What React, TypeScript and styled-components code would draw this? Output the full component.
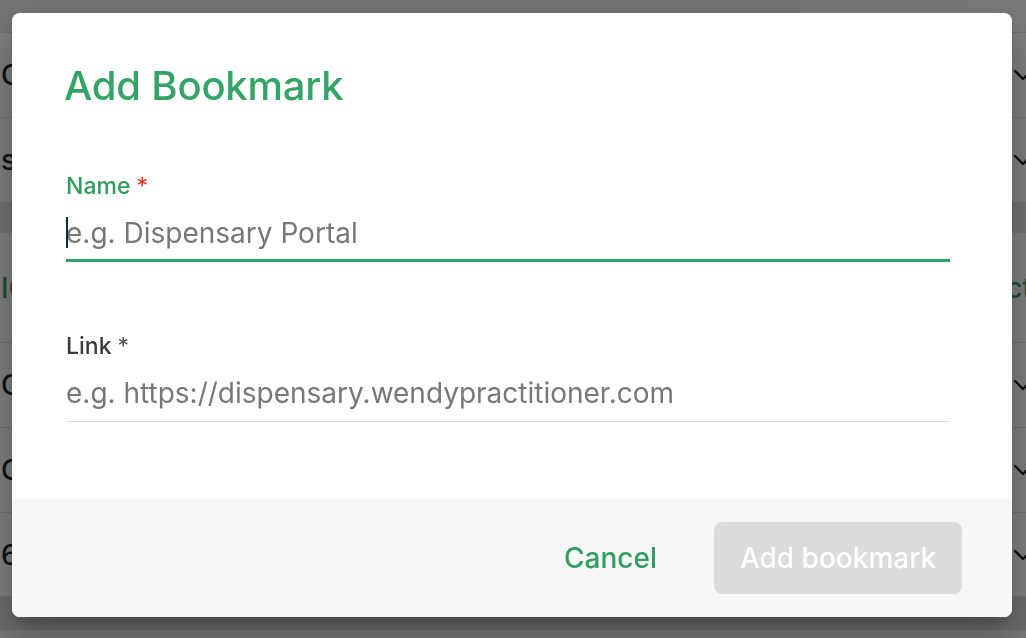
import React from "react";
import styled, { createGlobalStyle } from "styled-components";
import { ChevronDown } from "lucide-react";

const GlobalStyle = createGlobalStyle`
  html, body { margin: 0; padding: 0; overflow: hidden; }
  body { font-family: Inter, "Noto Sans", sans-serif; background: #fff; }
  * { box-sizing: border-box; }
`;

/* ---------- background page ---------- */
const Page = styled.div`
  width: 1026px;
  height: 638px;
  overflow: hidden;
  background: #f0f0f0;
  display: flex;
  flex-direction: column;
`;

const TopBar = styled.div`
  height: 33px;
  flex: none;
  display: flex;
  border-bottom: 1px solid #dcdcdc;
  background: #ececec;
`;

const TopBarRight = styled.div`
  margin-left: auto;
  width: 226px;
  background: #f6f6f6;
`;

const Row = styled.div<{ $h: number; $green?: boolean }>`
  height: ${(p) => p.$h}px;
  flex: none;
  display: flex;
  align-items: center;
  justify-content: space-between;
  background: #fff;
  border-bottom: 1px solid #e2e2e2;
  padding-left: 1px;
  font-size: 28px;
  font-weight: 500;
  color: ${(p) => (p.$green ? "#3a9c60" : "#1b2e2e")};
  white-space: nowrap;
`;

const Band = styled.div<{ $h: number; $bg: string }>`
  height: ${(p) => p.$h}px;
  flex: none;
  background: ${(p) => p.$bg};
`;

const RowChevron = styled(ChevronDown)`
  margin-right: -13px;
  color: #222;
  flex: none;
`;

const RowRightText = styled.span`
  margin-right: -6px;
`;

/* ---------- dialog ---------- */
const Overlay = styled.div`
  position: fixed;
  inset: 0;
  background: rgba(0, 0, 0, 0.5);
  display: flex;
  justify-content: flex-start;
  align-items: flex-start;
  padding: 13px 0 0 12px;
`;

const Dialog = styled.div`
  width: 1000px;
  height: 604px;
  background: #fff;
  border-radius: 8px;
  overflow: hidden;
  display: flex;
  flex-direction: column;
  box-shadow: 0 11px 15px -7px rgba(0, 0, 0, 0.2),
    0 24px 38px 3px rgba(0, 0, 0, 0.14), 0 9px 46px 8px rgba(0, 0, 0, 0.12);
`;

const Body = styled.div`
  flex: 1;
  padding: 49px 62px 0 52px;
  display: flex;
  flex-direction: column;
`;

const Title = styled.h2`
  margin: 0 0 62px;
  font-size: 40px;
  line-height: 48px;
  font-weight: 500;
  color: #34a466;
  letter-spacing: -0.2px;
`;

const Field = styled.div`
  display: flex;
  flex-direction: column;
  margin: 0 0 70px 2px;
`;

const Label = styled.label<{ $focused?: boolean }>`
  font-size: 23px;
  line-height: 28px;
  font-weight: 500;
  color: ${(p) => (p.$focused ? "#2f9e5e" : "#3a3a3a")};
  margin-bottom: 16px;
`;

const Star = styled.span<{ $focused?: boolean }>`
  color: ${(p) => (p.$focused ? "#e5301c" : "#555")};
  font-weight: 400;
  margin-left: 6px;
`;

const InputWrap = styled.div<{ $focused?: boolean }>`
  position: relative;
  padding-bottom: 12px;
  &::after {
    content: "";
    position: absolute;
    left: 0;
    right: 0;
    bottom: 0;
    height: ${(p) => (p.$focused ? 3 : 1)}px;
    background: ${(p) => (p.$focused ? "#34a466" : "#dddddd")};
  }
`;

const Input = styled.input`
  display: block;
  width: 100%;
  border: 0;
  outline: none;
  padding: 0;
  margin: 0;
  background: transparent;
  font-family: Inter, "Noto Sans", sans-serif;
  font-size: 28px;
  line-height: 34px;
  height: 34px;
  color: #222;
  caret-color: transparent;
  &::placeholder {
    color: #777;
    opacity: 1;
  }
`;

const Caret = styled.span`
  position: absolute;
  left: 0;
  top: 1px;
  width: 2px;
  height: 31px;
  background: #0f2a33;
`;

const Footer = styled.div`
  height: 119px;
  flex: none;
  background: #f6f7f6;
  display: flex;
  justify-content: flex-end;
  align-items: center;
  gap: 33px;
  padding-right: 50px;
`;

const TextButton = styled.button`
  border: 0;
  background: transparent;
  font-family: Inter, "Noto Sans", sans-serif;
  font-size: 28px;
  font-weight: 500;
  color: #2f9e5e;
  padding: 0 24px;
  height: 72px;
  cursor: pointer;
`;

const PrimaryButton = styled.button`
  border: 0;
  border-radius: 8px;
  background: #dbdcdb;
  color: #fff;
  font-family: Inter, "Noto Sans", sans-serif;
  font-size: 28px;
  font-weight: 500;
  width: 248px;
  height: 72px;
  padding: 0;
`;

export default function App() {
  return (
    <>
      <GlobalStyle />
      <Page>
        <TopBar>
          <TopBarRight />
        </TopBar>
        <Row $h={85}>
          <span>Consultation notes</span>
          <RowChevron size={32} strokeWidth={1.8} />
        </Row>
        <Row $h={85}>
          <span>summary</span>
          <RowChevron size={32} strokeWidth={1.8} />
        </Row>
        <Band $h={30} $bg="#e6e6e6" />
        <Row $h={110} $green>
          <span>ICONS</span>
          <RowRightText>Select</RowRightText>
        </Row>
        <Row $h={85}>
          <span>Clinic</span>
          <RowChevron size={32} strokeWidth={1.8} />
        </Row>
        <Row $h={85}>
          <span>Contacts</span>
          <RowChevron size={32} strokeWidth={1.8} />
        </Row>
        <Row $h={84}>
          <span>60 days</span>
          <RowChevron size={32} strokeWidth={1.8} />
        </Row>
        <Band $h={33} $bg="#d8d8d8" />
        <Band $h={20} $bg="#eeeeee" />
      </Page>
      <Overlay>
        <Dialog role="dialog" aria-labelledby="bm-title">
          <Body>
            <Title id="bm-title">Add Bookmark</Title>
            <Field>
              <Label $focused htmlFor="bm-name">
                Name<Star $focused>*</Star>
              </Label>
              <InputWrap $focused>
                <Input id="bm-name" placeholder="e.g. Dispensary Portal" />
                <Caret />
              </InputWrap>
            </Field>
            <Field>
              <Label htmlFor="bm-link">
                Link<Star>*</Star>
              </Label>
              <InputWrap>
                <Input
                  id="bm-link"
                  placeholder="e.g. https://dispensary.wendypractitioner.com"
                />
              </InputWrap>
            </Field>
          </Body>
          <Footer>
            <TextButton>Cancel</TextButton>
            <PrimaryButton disabled>Add bookmark</PrimaryButton>
          </Footer>
        </Dialog>
      </Overlay>
    </>
  );
}
